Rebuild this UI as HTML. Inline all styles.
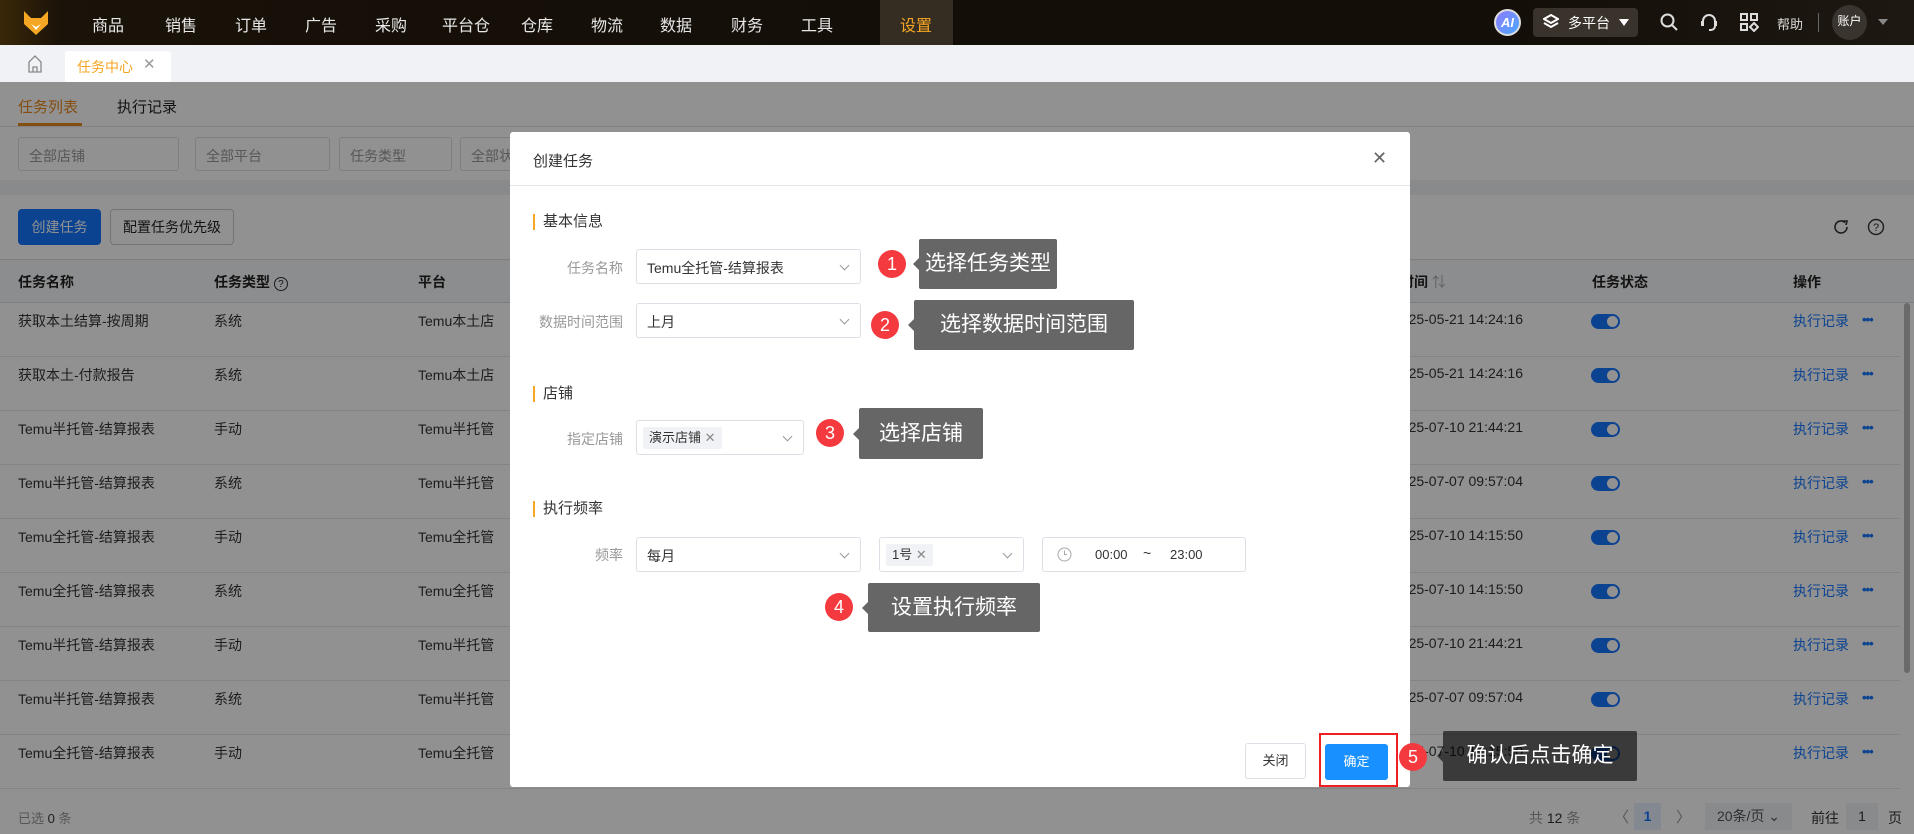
<!DOCTYPE html>
<html><head><meta charset="utf-8"><style>
*{box-sizing:border-box;margin:0;padding:0}
body{width:1914px;height:834px;overflow:hidden;position:relative;background:#fff;font-family:"Liberation Sans","Noto Sans CJK SC",sans-serif;font-size:14px;color:#333}
.a{position:absolute;white-space:nowrap}
.nav{left:0;top:0;width:1914px;height:45px;background:linear-gradient(90deg,#3a2708 0,#1a1309 60px,#150f08 400px,#130e08 1500px,#1e1812 1914px)}
.sel{border:1px solid #dcdfe6;border-radius:3px;background:#fff;height:35px}
.sel .v{position:absolute;left:10px;top:8px;font-size:14px;color:#333}
.sel .ar{position:absolute;right:12px;top:12px;width:7px;height:7px;border-right:1px solid #999;border-bottom:1px solid #999;transform:rotate(45deg)}
.fsel{border:1px solid #dcdfe6;border-radius:3px;background:#fff;height:34px;top:137px}
.fsel span{position:absolute;left:10px;top:8px;color:#999;font-size:14px}
.th{top:272px;font-weight:bold;font-size:14px;color:#222}
.td{font-size:14px;color:#333}
.tog{width:29px;height:15px;border-radius:8px;background:#1677ff}
.tog:after{content:"";position:absolute;right:2px;top:2px;width:11px;height:11px;border-radius:50%;background:#fff}
.lbl{font-size:14px;color:#999;text-align:right;width:110px}
.sec{font-size:15px;color:#333;padding-left:8px;border-left:2px solid #f5a623;line-height:16px}
.badge{width:28px;height:28px;border-radius:50%;background:#f43a3e;color:#fff;font-size:18px;text-align:center;line-height:28px}
.tip{background:rgba(0,0,0,.6);color:#fff;font-size:21px;border-radius:2px;text-align:center}
.tip:before{content:"";position:absolute;left:-6px;top:50%;margin-top:-6px;border-right:6px solid rgba(0,0,0,.6);border-top:6px solid transparent;border-bottom:6px solid transparent}
.tag{background:#f0f2f5;border-radius:2px;height:22px;top:6px;left:6px;padding:0 6px;font-size:13px;line-height:22px;color:#333}
</style></head><body>
<div class="a nav"></div>
<svg class="a" style="left:22px;top:10px" width="28" height="26" viewBox="0 0 28 26"><path d="M2 1 L9 8 L19 8 L26 1 L26 14 L14 25 L2 14 Z" fill="#f5a623"/><path d="M9 14 L14 20 L19 14 L14 17Z" fill="#fff"/></svg>
<div class="a" style="left:92px;top:12px;font-size:16px;color:#e8e8e8">商品</div>
<div class="a" style="left:165px;top:12px;font-size:16px;color:#e8e8e8">销售</div>
<div class="a" style="left:235px;top:12px;font-size:16px;color:#e8e8e8">订单</div>
<div class="a" style="left:305px;top:12px;font-size:16px;color:#e8e8e8">广告</div>
<div class="a" style="left:375px;top:12px;font-size:16px;color:#e8e8e8">采购</div>
<div class="a" style="left:442px;top:12px;font-size:16px;color:#e8e8e8">平台仓</div>
<div class="a" style="left:521px;top:12px;font-size:16px;color:#e8e8e8">仓库</div>
<div class="a" style="left:591px;top:12px;font-size:16px;color:#e8e8e8">物流</div>
<div class="a" style="left:660px;top:12px;font-size:16px;color:#e8e8e8">数据</div>
<div class="a" style="left:731px;top:12px;font-size:16px;color:#e8e8e8">财务</div>
<div class="a" style="left:801px;top:12px;font-size:16px;color:#e8e8e8">工具</div>
<div class="a" style="left:880px;top:0;width:73px;height:45px;background:#352c22"></div>
<div class="a" style="left:900px;top:12px;font-size:16px;color:#f5a623">设置</div>
<div class="a" style="left:1494px;top:9px;width:27px;height:27px;border-radius:50%;background:linear-gradient(135deg,#8f7bff,#4aa8ff);border:2px solid #ddd;color:#fff;font-weight:bold;font-size:13px;text-align:center;line-height:23px;font-style:italic">AI</div>
<div class="a" style="left:1533px;top:8px;width:105px;height:29px;border-radius:4px;background:#3a332b"></div>
<svg class="a" style="left:1543px;top:14px" width="16" height="16" viewBox="0 0 16 16"><path d="M8 1 L15 5 L8 9 L1 5 Z M1 9 L8 13 L15 9" fill="none" stroke="#fff" stroke-width="2"/></svg>
<div class="a" style="left:1568px;top:13px;font-size:14px;color:#fff">多平台</div>
<div class="a" style="left:1619px;top:19px;border-left:5px solid transparent;border-right:5px solid transparent;border-top:7px solid #fff"></div>
<svg class="a" style="left:1659px;top:12px" width="20" height="20" viewBox="0 0 20 20"><circle cx="8.5" cy="8.5" r="6" fill="none" stroke="#ddd" stroke-width="2"/><path d="M13 13 L18 18" stroke="#ddd" stroke-width="2"/></svg>
<svg class="a" style="left:1699px;top:12px" width="20" height="20" viewBox="0 0 20 20"><path d="M4 12 V9 a6 6 0 0 1 12 0 V12 M10 18 h2 a4 4 0 0 0 4-4" fill="none" stroke="#ddd" stroke-width="2"/><rect x="2" y="9" width="3" height="5" fill="#ddd"/><rect x="15" y="9" width="3" height="5" fill="#ddd"/></svg>
<svg class="a" style="left:1739px;top:12px" width="20" height="20" viewBox="0 0 20 20"><g fill="none" stroke="#ddd" stroke-width="2"><rect x="2" y="2" width="6" height="6"/><rect x="12" y="2" width="6" height="6"/><rect x="2" y="12" width="6" height="6"/><path d="M15 11 L19 15 L15 19 L11 15Z"/></g></svg>
<div class="a" style="left:1777px;top:14px;font-size:13px;color:#ddd">帮助</div>
<div class="a" style="left:1818px;top:13px;width:1px;height:19px;background:#666"></div>
<div class="a" style="left:1832px;top:5px;width:35px;height:35px;border-radius:50%;background:#3a342e;color:#fff;font-size:12px;text-align:center;line-height:33px">账户</div>
<div class="a" style="left:1878px;top:19px;border-left:5px solid transparent;border-right:5px solid transparent;border-top:6px solid #888"></div>
<div class="a" style="left:0;top:45px;width:1914px;height:37px;background:#f0f2f5"></div>
<svg class="a" style="left:27px;top:55px" width="16" height="18" viewBox="0 0 16 18"><path d="M2 17 V7 L8 1 L14 7 V17 Z M6 17 V12 H10 V17" fill="none" stroke="#888" stroke-width="1.3"/></svg>
<div class="a" style="left:65px;top:51px;width:106px;height:31px;background:#fff;border-radius:3px 3px 0 0"></div>
<div class="a" style="left:77px;top:57px;font-size:14px;color:#f5a623">任务中心</div>
<div class="a" style="left:143px;top:55px;font-size:15px;color:#999">✕</div>
<div class="a" style="left:18px;top:96px;font-size:15px;color:#e8891f">任务列表</div>
<div class="a" style="left:117px;top:96px;font-size:15px;color:#222">执行记录</div>
<div class="a" style="left:0;top:126px;width:1914px;height:1px;background:#e4e4e4"></div>
<div class="a" style="left:18px;top:123px;width:64px;height:3px;background:#e8891f"></div>
<div class="a fsel" style="left:18px;width:161px"><span>全部店铺</span></div>
<div class="a fsel" style="left:195px;width:135px"><span>全部平台</span></div>
<div class="a fsel" style="left:339px;width:113px"><span>任务类型</span></div>
<div class="a fsel" style="left:460px;width:100px"><span>全部状态</span></div>
<div class="a" style="left:0;top:180px;width:1914px;height:15px;background:#f0f2f5"></div>
<div class="a" style="left:18px;top:209px;width:83px;height:36px;background:#1677ff;border-radius:4px;color:#fff;font-size:14px;text-align:center;line-height:36px">创建任务</div>
<div class="a" style="left:110px;top:209px;width:124px;height:36px;border:1px solid #ccc;border-radius:4px;font-size:14px;text-align:center;line-height:34px;color:#222">配置任务优先级</div>
<svg class="a" style="left:1832px;top:218px" width="18" height="18" viewBox="0 0 18 18"><path d="M15 9 A6 6 0 1 1 13 4.5" fill="none" stroke="#333" stroke-width="1.6"/><path d="M11 3 L15 3 L14 7" fill="none" stroke="#333" stroke-width="1.6"/></svg>
<svg class="a" style="left:1867px;top:218px" width="18" height="18" viewBox="0 0 18 18"><circle cx="9" cy="9" r="7.5" fill="none" stroke="#333" stroke-width="1.4"/><text x="9" y="13" font-size="11" text-anchor="middle" fill="#333" font-family="Liberation Sans">?</text></svg>
<div class="a" style="left:0;top:259px;width:1914px;height:44px;background:#f7f8fa;border-top:1px solid #ddd;border-bottom:1px solid #ddd"></div>
<div class="a th" style="left:18px">任务名称</div>
<div class="a th" style="left:214px">任务类型 <span style="font-weight:normal;border:1px solid #333;border-radius:50%;display:inline-block;width:14px;height:14px;font-size:10px;text-align:center;line-height:13px">?</span></div>
<div class="a th" style="left:418px">平台</div>
<div class="a th" style="left:1372px">更新时间 <span style="color:#aaa;font-weight:normal">⇅</span></div>
<div class="a th" style="left:1592px">任务状态</div>
<div class="a th" style="left:1793px">操作</div>
<div class="a" style="left:1904px;top:303px;width:6px;height:370px;background:#bbb;border-radius:3px"></div>
<div id="rows"></div>
<script>
var d=[["获取本土结算-按周期","系统","Temu本土店","2025-05-21 14:24:16"],["获取本土-付款报告","系统","Temu本土店","2025-05-21 14:24:16"],["Temu半托管-结算报表","手动","Temu半托管","2025-07-10 21:44:21"],["Temu半托管-结算报表","系统","Temu半托管","2025-07-07 09:57:04"],["Temu全托管-结算报表","手动","Temu全托管","2025-07-10 14:15:50"],["Temu全托管-结算报表","系统","Temu全托管","2025-07-10 14:15:50"],["Temu半托管-结算报表","手动","Temu半托管","2025-07-10 21:44:21"],["Temu半托管-结算报表","系统","Temu半托管","2025-07-07 09:57:04"],["Temu全托管-结算报表","手动","Temu全托管","2025-07-10 14:15:50"]];
var h="";for(var i=0;i<d.length;i++){var y=311+54*i;
h+='<div class="a td" style="left:18px;top:'+y+'px">'+d[i][0]+'</div><div class="a td" style="left:214px;top:'+y+'px">'+d[i][1]+'</div><div class="a td" style="left:418px;top:'+y+'px">'+d[i][2]+'</div><div class="a td" style="left:1393px;top:'+y+'px">'+d[i][3]+'</div><div class="a tog" style="left:1591px;top:'+(y+3)+'px"></div><div class="a td" style="left:1793px;top:'+y+'px;color:#1677ff">执行记录</div><div class="a td" style="left:1862px;top:'+(y+1)+'px;color:#1677ff;font-weight:bold;font-size:13px;letter-spacing:-1px">•••</div><div class="a" style="left:0;top:'+(y+45)+'px;width:1900px;height:1px;background:#e8e8e8"></div>';}
document.getElementById("rows").innerHTML=h;
</script>
<div class="a" style="left:18px;top:808px;font-size:13px;color:#999">已选 <b style="color:#333;font-weight:normal">0</b> 条</div>
<div class="a" style="left:1529px;top:808px;font-size:14px;color:#999">共 <span style="color:#333">12</span> 条</div>
<div class="a" style="left:1614px;top:806px;font-size:15px;color:#999">〈</div>
<div class="a" style="left:1634px;top:803px;width:27px;height:27px;background:#e6f0ff;color:#1677ff;font-weight:bold;text-align:center;line-height:27px">1</div>
<div class="a" style="left:1676px;top:806px;font-size:15px;color:#999">〉</div>
<div class="a" style="left:1705px;top:803px;width:87px;height:27px;background:#f0f2f5;color:#555;text-align:center;line-height:27px;font-size:14px">20条/页 ⌄</div>
<div class="a" style="left:1811px;top:808px;font-size:14px;color:#333">前往</div>
<div class="a" style="left:1846px;top:803px;width:32px;height:27px;background:#f0f2f5;text-align:center;line-height:27px">1</div>
<div class="a" style="left:1888px;top:808px;font-size:14px;color:#333">页</div>
<div class="a" style="left:0;top:82px;width:1914px;height:752px;background:rgba(0,0,0,.43)"></div>
<div class="a" style="left:510px;top:132px;width:900px;height:655px;background:#fff;border-radius:3px"></div>
<div class="a" style="left:533px;top:150px;font-size:15px;color:#333">创建任务</div>
<div class="a" style="left:1372px;top:148px;font-size:18px;color:#666">✕</div>
<div class="a" style="left:510px;top:185px;width:900px;height:1px;background:#e4e4e4"></div>
<div class="a sec" style="left:533px;top:214px">基本信息</div>
<div class="a lbl" style="left:513px;top:258px">任务名称</div>
<div class="a sel" style="left:636px;top:249px;width:225px"><span class="v">Temu全托管-结算报表</span><i class="ar"></i></div>
<div class="a lbl" style="left:513px;top:312px">数据时间范围</div>
<div class="a sel" style="left:636px;top:303px;width:225px"><span class="v">上月</span><i class="ar"></i></div>
<div class="a sec" style="left:533px;top:386px">店铺</div>
<div class="a lbl" style="left:513px;top:429px">指定店铺</div>
<div class="a sel" style="left:636px;top:420px;width:168px"><span class="a tag">演示店铺 <span style="color:#888">✕</span></span><i class="ar"></i></div>
<div class="a sec" style="left:533px;top:501px">执行频率</div>
<div class="a lbl" style="left:513px;top:545px">频率</div>
<div class="a sel" style="left:636px;top:537px;width:225px"><span class="v">每月</span><i class="ar"></i></div>
<div class="a sel" style="left:879px;top:537px;width:145px"><span class="a tag">1号 <span style="color:#888">✕</span></span><i class="ar"></i></div>
<div class="a sel" style="left:1042px;top:537px;width:204px"><svg class="a" style="left:14px;top:9px" width="15" height="15" viewBox="0 0 15 15"><circle cx="7.5" cy="7.5" r="6.5" fill="none" stroke="#aaa"/><path d="M7.5 3.5 V7.5 H10" fill="none" stroke="#aaa"/></svg><span class="a" style="left:52px;top:9px;font-size:13px;color:#333">00:00</span><span class="a" style="left:100px;top:7px;color:#333">~</span><span class="a" style="left:127px;top:9px;font-size:13px;color:#333">23:00</span></div>
<div class="a" style="left:1245px;top:743px;width:61px;height:36px;border:1px solid #dcdfe6;border-radius:3px;text-align:center;line-height:34px;font-size:13px;color:#333">关闭</div>
<div class="a" style="left:1319px;top:733px;width:79px;height:54px;border:2px solid #f02020"></div>
<div class="a" style="left:1325px;top:744px;width:63px;height:36px;background:#1890ff;border-radius:3px;text-align:center;line-height:36px;font-size:13px;color:#fff">确定</div>
<div class="a badge" style="left:878px;top:250px">1</div>
<div class="a tip" style="left:919px;top:239px;width:138px;height:50px;line-height:50px">选择任务类型</div>
<div class="a badge" style="left:871px;top:311px">2</div>
<div class="a tip" style="left:914px;top:300px;width:220px;height:50px;line-height:50px">选择数据时间范围</div>
<div class="a badge" style="left:816px;top:419px">3</div>
<div class="a tip" style="left:859px;top:408px;width:124px;height:51px;line-height:51px">选择店铺</div>
<div class="a badge" style="left:825px;top:593px">4</div>
<div class="a tip" style="left:868px;top:583px;width:172px;height:49px;line-height:49px">设置执行频率</div>
<div class="a badge" style="left:1399px;top:743px">5</div>
<div class="a tip" style="left:1443px;top:731px;width:194px;height:50px;line-height:50px">确认后点击确定</div>
</body></html>
